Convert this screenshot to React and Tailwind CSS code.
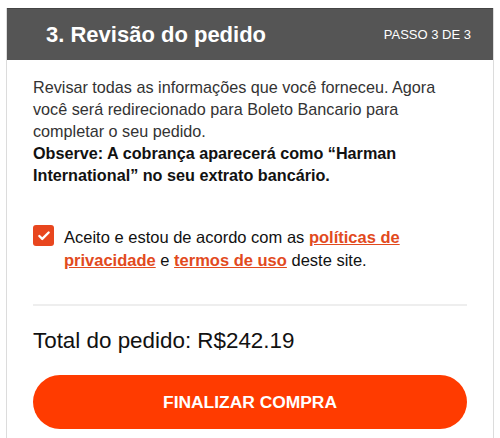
import { Check } from "lucide-react";

export default function App() {
  return (
    <div className="w-[500px] h-[438px] overflow-hidden bg-white pt-2 px-[6px] font-['Liberation_Sans',Arial,sans-serif]">
      <div className="border-x border-[#dcdcdc] h-full">
        {/* Header */}
        <div className="h-[52px] bg-[#555555] border-t border-[#444] flex items-center justify-between pl-[39px] pr-[22px]">
          <h2 className="text-white text-[22px] font-bold">3. Revisão do pedido</h2>
          <span className="text-white text-[13px]">PASSO 3 DE 3</span>
        </div>

        {/* Body */}
        <div className="px-[26px] pt-[16px]">
          <p className="text-[16.2px] leading-[22px] text-[#333]">
            Revisar todas as informações que você forneceu. Agora você será
            redirecionado para Boleto Bancario para completar o seu pedido.
            <br />
            <span className="font-bold text-[#111]">
              Observe: A cobrança aparecerá como “Harman International” no seu
              extrato bancário.
            </span>
          </p>

          <div className="flex items-start gap-[10px] mt-[40px]">
            <div className="mt-[-1px] w-[21px] h-[21px] shrink-0 rounded-[3px] bg-[#e8461e] flex items-center justify-center">
              <Check size={14} strokeWidth={4} className="text-white" />
            </div>
            <p className="text-[16.5px] leading-[23px] text-[#111]">
              Aceito e estou de acordo com as{" "}
              <a href="#" className="font-bold text-[#e24a1d] underline">
                políticas de privacidade
              </a>{" "}
              e{" "}
              <a href="#" className="font-bold text-[#e24a1d] underline">
                termos de uso
              </a>{" "}
              deste site.
            </p>
          </div>

          <div className="mt-[32px] border-t-2 border-[#eeeeee]" />

          <div className="mt-[21px] text-[22.4px] leading-[28px] text-[#111]">
            Total do pedido: R$242.19
          </div>

          <button className="mt-[20px] w-full h-[54px] rounded-full bg-[#ff3b00] text-white font-bold text-[17.4px]">
            FINALIZAR COMPRA
          </button>
        </div>
      </div>
    </div>
  );
}
